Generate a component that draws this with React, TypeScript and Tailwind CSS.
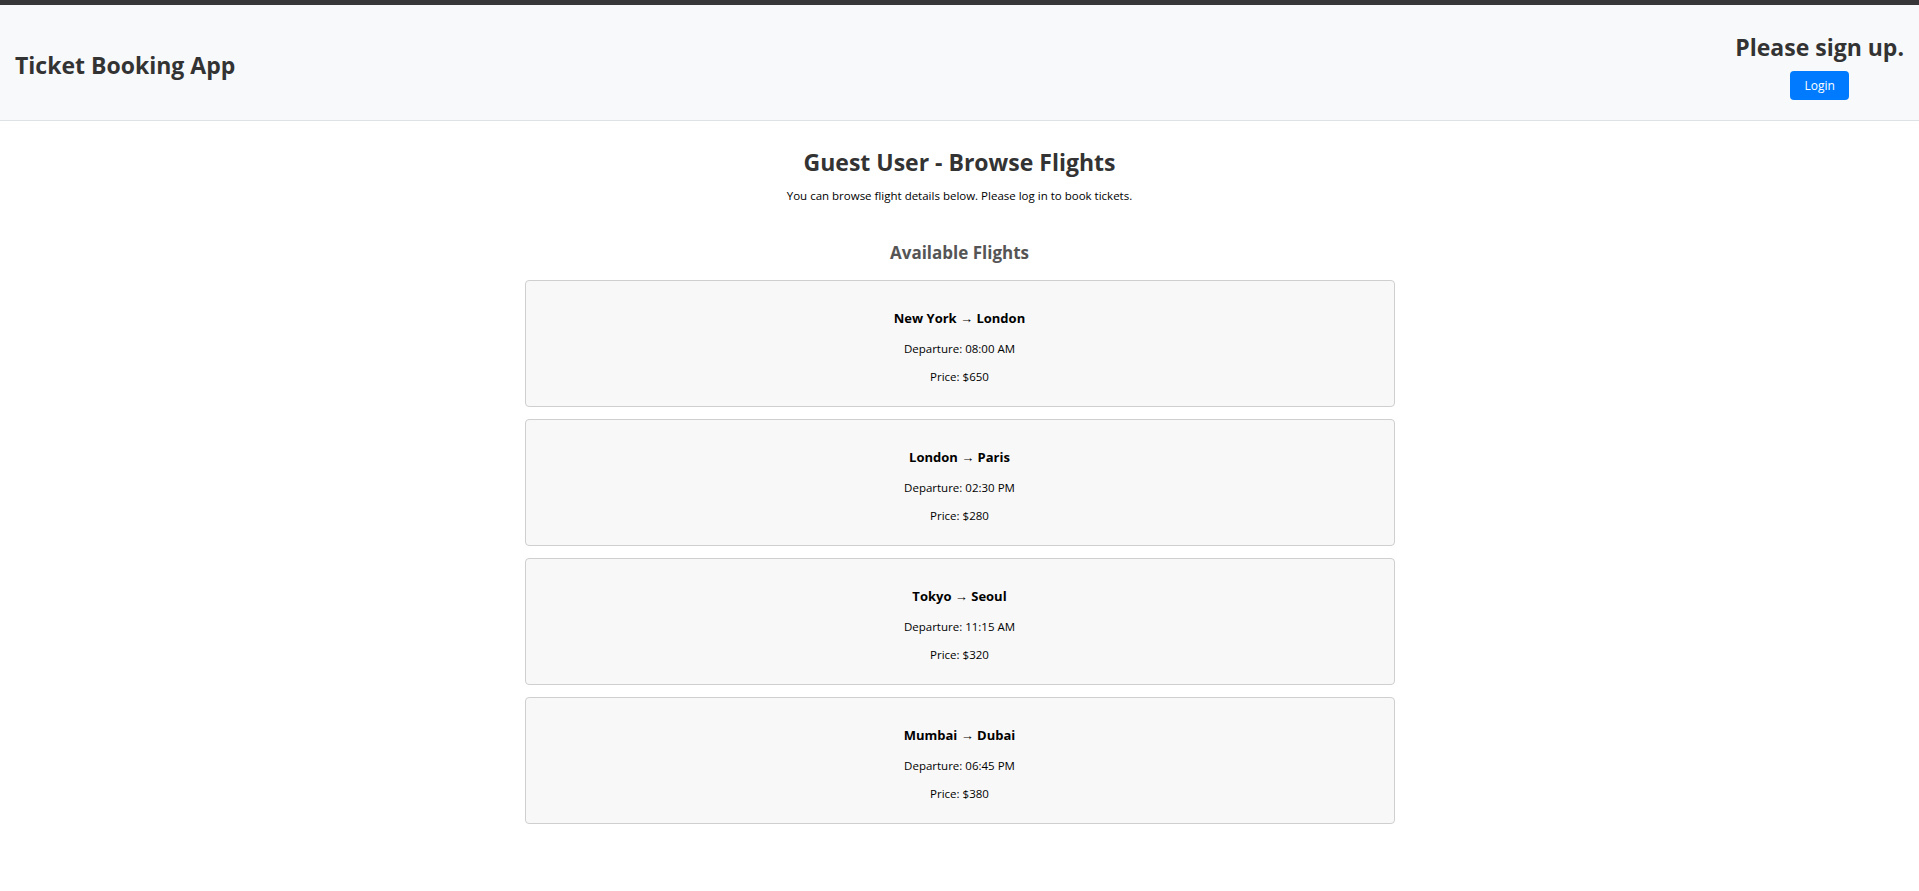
const flights = [
  { from: "New York", to: "London", time: "08:00 AM", price: 650 },
  { from: "London", to: "Paris", time: "02:30 PM", price: 280 },
  { from: "Tokyo", to: "Seoul", time: "11:15 AM", price: 320 },
  { from: "Mumbai", to: "Dubai", time: "06:45 PM", price: 380 },
];

function FlightCard({ from, to, time, price }: (typeof flights)[number]) {
  return (
    <div className="h-[127px] rounded-[4px] border border-[#cfcfcf] bg-[#f8f8f8] pt-[28px] text-center text-black">
      <h3 className="text-[13px] font-bold leading-[18px]">
        {from} → {to}
      </h3>
      <p className="mt-[14px] text-[11.5px] leading-[16px]">Departure: {time}</p>
      <p className="mt-[12px] text-[11.5px] leading-[16px]">Price: ${price}</p>
    </div>
  );
}

export default function App() {
  return (
    <div className="min-h-screen bg-white font-['Segoe_UI','Open_Sans',sans-serif]">
      <div className="h-[5px] bg-[#37373a]" />
      <header className="flex h-[116px] items-center justify-between border-b border-[#dee2e6] bg-[#f8f9fa] px-[15px] pt-[6px]">
        <h1 className="text-[23px] font-bold text-[#333]">Ticket Booking App</h1>
        <div className="flex flex-col items-center">
          <h2 className="text-[23px] font-bold leading-[32px] text-[#333]">
            Please sign up.
          </h2>
          <button className="mt-[8px] h-[29px] w-[59px] rounded-[4px] bg-[#007bff] text-[12px] text-white">
            Login
          </button>
        </div>
      </header>

      <main className="mx-auto w-[870px] pb-10 text-center">
        <h2 className="mt-[25px] text-[23px] font-bold leading-[32px] text-[#333]">
          Guest User - Browse Flights
        </h2>
        <p className="mt-[10px] text-[11.5px] leading-[16px] text-black">
          You can browse flight details below. Please log in to book tickets.
        </p>
        <h3 className="mt-[37px] text-[17px] font-bold leading-[24px] text-[#555]">
          Available Flights
        </h3>
        <div className="mt-[15px] flex flex-col gap-[12px]">
          {flights.map((f) => (
            <FlightCard key={f.from} {...f} />
          ))}
        </div>
      </main>
    </div>
  );
}
